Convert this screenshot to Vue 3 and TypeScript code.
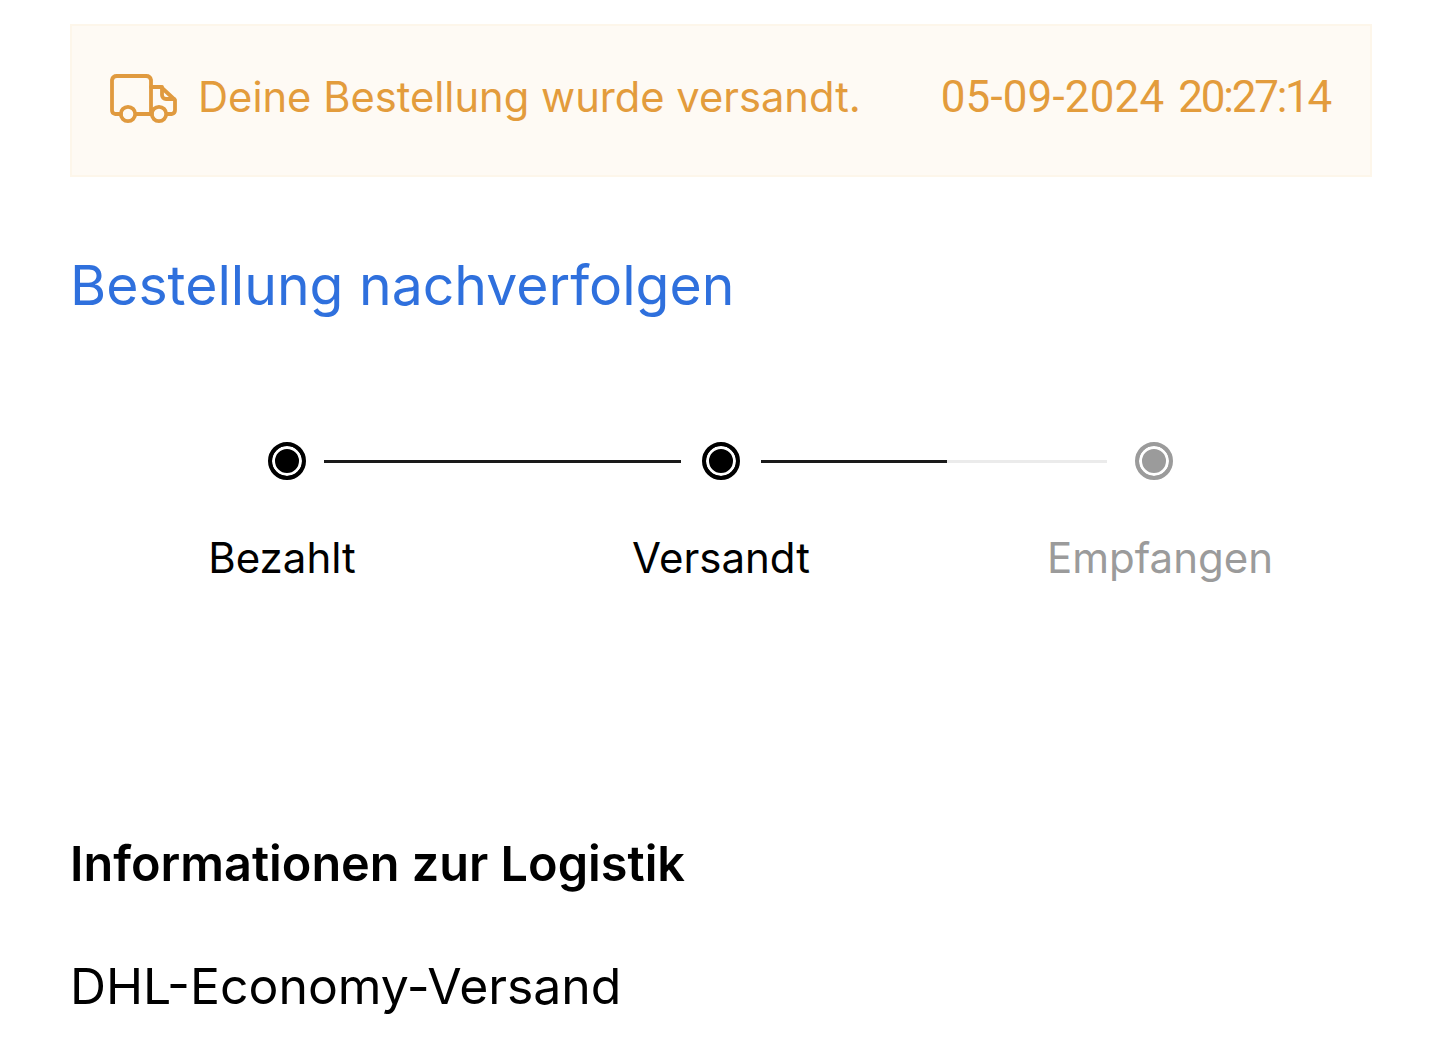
<template>
  <div class="page">
    <div class="notice">
      <div class="notice-left">
        <svg class="truck" width="70" height="54" viewBox="0 -4 70 54" fill="none" stroke="#e09a3f" stroke-width="3.8" stroke-linejoin="round" stroke-linecap="round">
          <path d="M11 40H5a4 4 0 0 1-3-4V6a5 5 0 0 1 5-4h29a5 5 0 0 1 5 4v34H26" />
          <path d="M41 13h10l14 13v10a4 4 0 0 1-3 4h-5" />
          <path d="M41 40h1" />
          <path d="M52 13v8a4 4 0 0 0 4 4h8" />
          <circle cx="18" cy="40" r="7.200" />
          <circle cx="49" cy="40" r="7.200" />
        </svg>
        <span>Deine Bestellung wurde versandt.</span>
      </div>
      <div class="stamp">
        <span class="date">05-09-2024</span>
        <span class="time">20:27:14</span>
      </div>
    </div>

    <h1 class="title">Bestellung nachverfolgen</h1>

    <div class="tracker">
      <div class="track">
        <span class="dot" />
        <span class="line done" />
        <span class="dot" />
        <span class="line half" />
        <span class="dot off" />
      </div>
      <div class="labels">
        <div v-for="step in steps" :key="step.name" :class="['label', step.cls]">{{ step.name }}</div>
      </div>
    </div>

    <h2 class="section">Informationen zur Logistik</h2>
    <p class="carrier">DHL-Economy-Versand</p>
  </div>
</template>

<script setup lang="ts">
const steps = [
  { name: 'Bezahlt', cls: 'first' },
  { name: 'Versandt', cls: '' },
  { name: 'Empfangen', cls: 'last' },
]
</script>

<style scoped>
.page {
  width: 1440px;
  height: 1060px;
  overflow: hidden;
  box-sizing: border-box;
  padding: 24px 68px 0 70px;
  background: #fff;
  font-family: Inter, sans-serif;
  color: #000;
}

.notice {
  height: 153px;
  box-sizing: border-box;
  border: 2px solid #fdf6ea;
  background: #fefaf4;
  display: flex;
  align-items: center;
  justify-content: space-between;
  padding: 0 40px 8px 38px;
  color: #e39c3c;
  font-size: 41.7px;
}

.notice-left {
  display: flex;
  align-items: center;
  gap: 18px;
}

.truck {
  flex: none;
}

.stamp {
  display: flex;
  gap: 14px;
  font-family: Roboto, sans-serif;
  font-size: 44px;
}

.date {
  letter-spacing: 0.15px;
}

.time {
  letter-spacing: -2.25px;
}

.title {
  margin: 70px 0 0;
  font-size: 55.3px;
  line-height: 76px;
  font-weight: 400;
  color: #2f70dd;
}

.tracker {
  margin-top: 119px;
}

.track {
  display: flex;
  align-items: center;
  padding-left: 198px;
}

.dot {
  flex: none;
  width: 38px;
  height: 38px;
  box-sizing: border-box;
  border: 4px solid #000;
  border-radius: 50%;
  background: #000;
  box-shadow: inset 0 0 0 3px #fff;
}

.dot.off {
  border-color: #9b9b9b;
  background: #9b9b9b;
}

.line {
  height: 3px;
  width: 357px;
  margin: 0 21px 0 18px;
  background: #1a1a1a;
}

.line.half {
  width: 346px;
  margin: 0 28px 0 21px;
  background: linear-gradient(to right, #1a1a1a 186px, #ebebeb 186px);
}

.labels {
  display: grid;
  grid-template-columns: repeat(3, 1fr);
  margin-top: 49px;
}

.label {
  text-align: center;
  font-size: 42px;
  line-height: 58px;
}

.label.first {
  transform: translateX(-5px);
}

.label.last {
  color: #9b9b9b;
  transform: translateX(5px);
}

.section {
  margin: 245px 0 0;
  font-size: 48.6px;
  line-height: 64px;
  font-weight: 600;
}

.carrier {
  margin: 57px 0 0;
  font-size: 49.9px;
  line-height: 66px;
}
</style>
